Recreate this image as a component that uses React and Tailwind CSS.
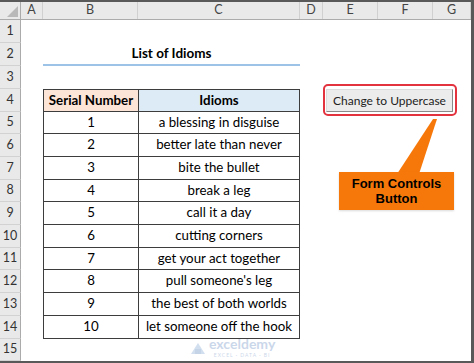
import React from "react"

const cols = [
	{ key: "A", w: "w-[22px]" },
	{ key: "B", w: "w-[95px]" },
	{ key: "C", w: "w-[162px]" },
	{ key: "D", w: "w-[23px]" },
	{ key: "E", w: "w-[55px]" },
	{ key: "F", w: "w-[55px]" },
	{ key: "G", w: "w-[38px]" },
]

// row heights to land on the screenshot's gridlines
const rowHeights = [23, 23, 23, 23, 22, 23, 23, 22, 23, 23, 22, 23, 23, 23, 22]

const idioms = [
	"a blessing in disguise",
	"better late than never",
	"bite the bullet",
	"break a leg",
	"call it a day",
	"cutting corners",
	"get your act together",
	"pull someone's leg",
	"the best of both worlds",
	"let someone off the hook",
]

function HeaderRow() {
	return (
		<div className="flex h-[18px] bg-[#e9e9e9] border-b border-[#ababab]">
			<div className="w-[21px] relative border-r border-[#ababab]">
				<div className="absolute right-[2px] bottom-[2px] w-0 h-0 border-l-[11px] border-l-transparent border-b-[11px] border-b-[#b9b9b9]" />
			</div>
			{cols.map((c) => (
				<div
					key={c.key}
					className={`${c.w} flex items-center justify-center border-r border-[#d0d0d0] text-[12.5px] text-[#444]`}
				>
					{c.key}
				</div>
			))}
		</div>
	)
}

function Row({ n, h }) {
	const hClass = h === 23 ? "h-[23px]" : "h-[22px]"
	const tableRow = n >= 4 && n <= 14
	const first = n === 4
	const idx = n - 5

	return (
		<div className={`flex ${hClass}`}>
			<div className="w-[21px] flex items-center justify-center bg-[#e9e9e9] border-r border-[#ababab] border-b border-b-[#d2d2d2] text-[12.5px] text-[#333]">
				{n}
			</div>
			<div className="w-[22px]" />
			{n === 2 ? (
				<div className="w-[257px] flex items-center justify-center border-b-2 border-[#9dc3e6] font-bold text-[13.5px] text-black">
					List of Idioms
				</div>
			) : tableRow ? (
				<>
					<div
						className={`w-[95px] flex items-center justify-center border-l border-b border-[#3d3d3d] text-[13.3px] text-black ${
							first ? "border-t bg-[#fce4d6] font-bold" : ""
						}`}
					>
						{first ? "Serial Number" : idx + 1}
					</div>
					<div
						className={`w-[162px] flex items-center justify-center border-l border-r border-b border-[#3d3d3d] text-[13.3px] text-black ${
							first ? "border-t bg-[#ddebf7] font-bold" : ""
						}`}
					>
						{first ? "Idioms" : idioms[idx]}
					</div>
				</>
			) : (
				<div className="w-[257px]" />
			)}
			<div className="w-[23px]" />
			<div className="w-[55px]" />
			<div className="w-[55px]" />
			<div className="w-[38px]" />
		</div>
	)
}

export default function App() {
	return (
		<div className="relative w-[474px] h-[363px] overflow-hidden bg-[#595959] pt-[2px] pr-[3px] pb-[2px] font-['Lato',sans-serif]">
			<div className="h-full bg-white">
				<HeaderRow />
				{rowHeights.map((h, i) => (
					<Row key={i} n={i + 1} h={h} />
				))}
			</div>

			{/* form control button with red highlight */}
			<div className="absolute left-[323px] top-[84px] w-[134px] h-[32px] border-2 border-[#e2333f] rounded-[5px] bg-white" />
			<button className="absolute left-[326px] top-[89px] w-[127px] h-[23px] flex items-center justify-center bg-[#ececec] border border-t-[#dcdcdc] border-l-[#dcdcdc] border-r-[#8a8a8a] border-b-[#8a8a8a] text-[12px] text-[#222]">
				Change to Uppercase
			</button>

			{/* callout */}
			<svg className="absolute left-[394px] top-[117px]" width="46" height="58" viewBox="0 0 46 58">
				<polygon points="3,57 25,57 43,2 39,2" fill="#f7780a" />
			</svg>
			<div className="absolute left-[339px] top-[172px] w-[115px] h-[38px] bg-[#f7780a] shadow-[0_1px_2px_rgba(0,0,0,0.15)] flex flex-col items-center justify-center font-['Liberation_Sans',sans-serif] font-bold text-[13px] leading-[15px] text-black">
				<span>Form Controls</span>
				<span>Button</span>
			</div>

			{/* watermark */}
			<div className="absolute left-[190px] top-[337px] flex items-center gap-[3px] opacity-40">
				<svg width="16" height="14" viewBox="0 0 16 14">
					<path d="M1 13 L8 2 L15 13 Z" fill="#8fb0d8" />
					<rect x="5" y="8" width="6" height="5" fill="#6f95c4" />
				</svg>
				<div className="flex flex-col items-center">
					<span className="block text-[14px] leading-[14px] font-bold text-[#7d9ccb]">exceldemy</span>
					<span className="block text-[5px] leading-[8px] tracking-[1px] text-[#7d9ccb]">EXCEL · DATA · BI</span>
				</div>
			</div>
		</div>
	)
}
